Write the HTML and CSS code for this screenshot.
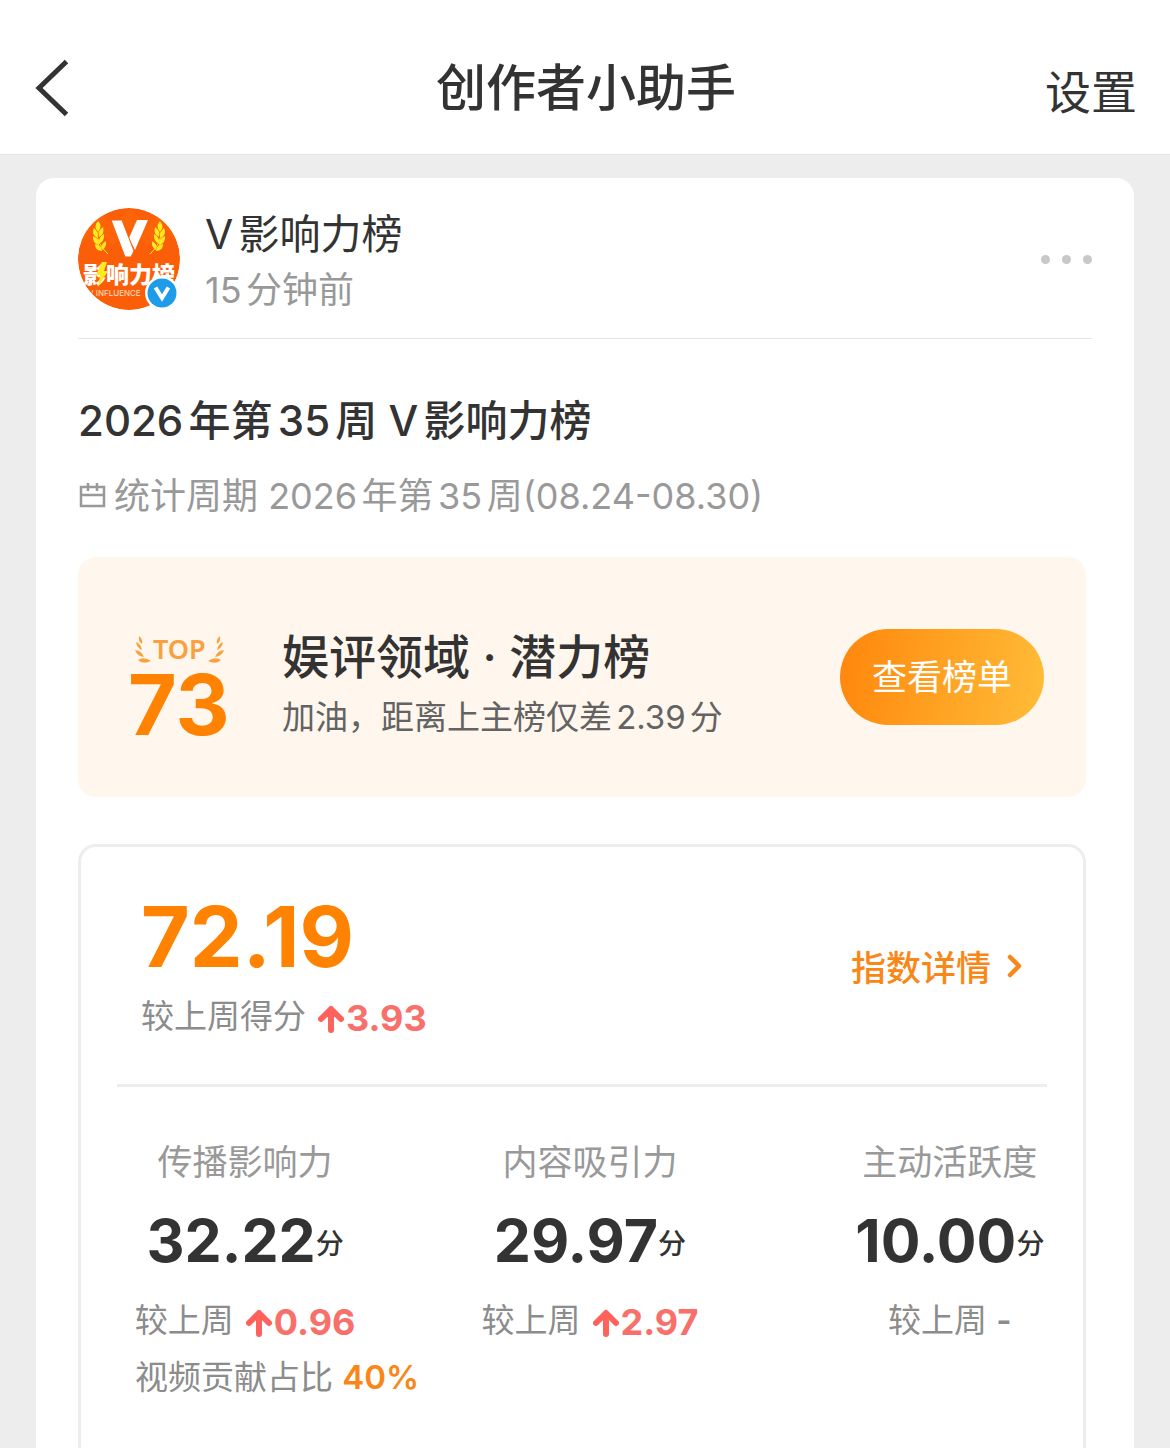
FILE: index.html
```html
<!DOCTYPE html>
<html lang="zh-CN">
<head>
	<meta charset="UTF-8">
	<meta name="viewport" content="width=device-width, initial-scale=1">
	<title>创作者小助手</title>
	<link rel="stylesheet" href="styles.css">
</head>
<body>
	<header class="navbar">
		<button class="back" type="button" aria-label="返回">
			<svg width="34" height="60" viewBox="0 0 34 60"><path d="M31.500 3.500L4 30l27.500 26.500" fill="none" stroke="#333" stroke-width="5"/></svg>
		</button>
		<h1>创作者小助手</h1>
		<a class="setting" href="#">设置</a>
	</header>
	<main class="card">
		<div class="author">
			<svg class="avatar" width="104" height="102" viewBox="0 0 104 102">
				<defs>
					<clipPath id="round"><circle cx="51" cy="51" r="51"/></clipPath>
					<g id="wheat" fill="#ffea20">
						<path d="M20 13q5 5 0 11q-5-5 0-11z"/>
						<path d="M16 20q5 4 3 10q-6-4-3-10z"/>
						<path d="M25 19q2 7-4 10q-2-6 4-10z"/>
						<path d="M15 28q7 3 6 9q-7-2-6-9z"/>
						<path d="M26 26q1 7-5 10q-1-7 5-10z"/>
						<path d="M17 36q7 1 7 7q-7 0-7-7z"/>
						<path d="M28 33q1 6-4 9q-2-6 4-9z"/>
						<path d="M19 24q0 12 11 22" fill="none" stroke="#ffea20" stroke-width="1"/>
					</g>
				</defs>
				<g clip-path="url(#round)">
					<circle cx="51" cy="51" r="51" fill="#fb5e08"/>
					<path d="M0 18l18-18 17 18 17-18 17 18 17-18 16 18v18L86 20 69 38 52 20 35 38 18 20 0 38z" fill="#ff7410" opacity=".3"/>
					<use href="#wheat"/>
					<use href="#wheat" transform="matrix(-1 0 0 1 102 0)"/>
					<path d="M59 12h11L57 42l-6-12z" fill="#fff"/>
					<path d="M33 12h11l12 31-3 6h-6z" fill="#fff" stroke="#fb5e08" stroke-width="1"/>
					<text class="logo-cn" x="5" y="75">影响力榜</text>
					<path d="M24 54h5l-3 9h4L20 79l2-12h-4z" fill="#ffea20"/>
					<text class="logo-en" x="10" y="88">V INFLUENCE</text>
				</g>
				<circle cx="84" cy="85" r="17" fill="#fff"/>
				<circle cx="84" cy="85" r="14.500" fill="#1f9ce9"/>
				<path d="M77.500 79.500L84 90l6.500-10.500" fill="none" stroke="#fff" stroke-width="4"/>
			</svg>
			<div class="who">
				<div class="name">V影响力榜</div>
				<div class="time">15分钟前</div>
			</div>
			<button class="more" type="button" aria-label="更多"><i></i><i></i><i></i></button>
		</div>
		<section class="content">
			<h2>2026年第35周 V影响力榜</h2>
			<p class="period">
				<svg width="28" height="28" viewBox="0 0 28 28" fill="none" stroke="#999" stroke-width="2.500"><path d="M3 5h23v19H3zM3 13h23M10 1v8M19 1v8"/></svg>
				<span>统计周期 2026年第35周(08.24-08.30)</span>
			</p>
			<div class="rank">
				<div class="top">
					<div class="top-label">
						<svg width="17" height="30" viewBox="0 0 17 30"><g id="laurel" fill="#f9a03f"><path d="M5 2q4 3 3 8q-4-3-3-8z"/><path d="M2 8q5 2 6 8q-5-2-6-8z"/><path d="M1 16q7 1 9 7q-7-1-9-7z"/><path d="M4 26q6-4 13 1q-8 4-13-1z"/></g></svg>
						<span>TOP</span>
						<svg width="17" height="30" viewBox="0 0 17 30"><use href="#laurel" transform="matrix(-1 0 0 1 17 0)"/></svg>
					</div>
					<div class="top-num">73</div>
				</div>
				<div class="field">
					<h3>娱评领域 · 潜力榜</h3>
					<p>加油，距离上主榜仅差2.39分</p>
				</div>
				<button class="view" type="button">查看榜单</button>
			</div>
			<div class="score">
				<div class="total">
					<div>
						<div class="total-num">72.19</div>
						<div class="compare">
							<span>较上周得分</span>
							<svg class="up" width="26" height="28" viewBox="0 0 26 28"><path d="M13 25V6M3 14L13 4l10 10" fill="none" stroke="#ff625c" stroke-width="6" stroke-linecap="round" stroke-linejoin="round"/></svg>
							<b>3.93</b>
						</div>
					</div>
					<a class="detail" href="#">指数详情
						<svg width="16" height="24" viewBox="0 0 16 24"><path d="M3 3l9 9-9 9" fill="none" stroke="#f98718" stroke-width="4.500" stroke-linecap="round" stroke-linejoin="round"/></svg>
					</a>
				</div>
				<div class="items">
					<div class="item">
						<h4>传播影响力</h4>
						<div class="num">32.22<small>分</small></div>
						<div class="compare">
							<span>较上周</span>
							<svg class="up" width="26" height="28" viewBox="0 0 26 28"><path d="M13 25V6M3 14L13 4l10 10" fill="none" stroke="#ff625c" stroke-width="6" stroke-linecap="round" stroke-linejoin="round"/></svg>
							<b>0.96</b>
						</div>
						<div class="video">视频贡献占比 <b>40%</b></div>
					</div>
					<div class="item">
						<h4>内容吸引力</h4>
						<div class="num">29.97<small>分</small></div>
						<div class="compare">
							<span>较上周</span>
							<svg class="up" width="26" height="28" viewBox="0 0 26 28"><path d="M13 25V6M3 14L13 4l10 10" fill="none" stroke="#ff625c" stroke-width="6" stroke-linecap="round" stroke-linejoin="round"/></svg>
							<b>2.97</b>
						</div>
					</div>
					<div class="item">
						<h4>主动活跃度</h4>
						<div class="num">10.00<small>分</small></div>
						<div class="compare"><span>较上周 <em>-</em></span></div>
					</div>
				</div>
			</div>
		</section>
	</main>
</body>
</html>
```
FILE: styles.css
```css
*{
	margin: 0;
	padding: 0;
	box-sizing: border-box;
}
body{
	min-height: 100vh;
	display: flex;
	flex-direction: column;
	background: #ededed;
	color: #333;
	font-family: Inter, "Noto Sans CJK SC", sans-serif;
	text-autospace: normal;
}
button{
	border: 0;
	background: none;
	font-family: inherit;
	cursor: pointer;
}
a{
	color: inherit;
	text-decoration: none;
}
svg{
	display: block;
	flex: none;
}

/* 顶部导航 */
.navbar{
	height: 155px;
	padding: 22px 33px 0 35px;
	display: grid;
	grid-template-columns: 1fr auto 1fr;
	align-items: center;
	background: #fff;
	border-bottom: 1px solid #e2e2e2;
}
.back{
	justify-self: start;
}
.navbar h1{
	font-size: 50px;
	line-height: 60px;
	font-weight: 500;
}
.setting{
	justify-self: end;
	padding-top: 8px;
	font-size: 46px;
	line-height: 60px;
}

/* 卡片 */
.card{
	flex: 1;
	display: flex;
	flex-direction: column;
	margin: 23px 36px 0;
	padding: 0 42px;
	background: #fff;
	border-radius: 18px 18px 0 0;
}
.author{
	height: 161px;
	display: flex;
	align-items: center;
	gap: 23px;
	padding-top: 2px;
	border-bottom: 1px solid #e6e6e6;
}
.logo-cn{
	font-size: 23px;
	font-weight: 900;
	fill: #fff;
}
.logo-en{
	font-size: 8px;
	fill: #ffe0c8;
}
.who{
	flex: 1;
	padding-top: 6px;
}
.name{
	font-size: 41px;
	line-height: 56px;
}
.time{
	font-size: 36px;
	line-height: 56px;
	color: #999;
}
.more{
	display: flex;
	gap: 12px;
}
.more i{
	width: 9px;
	height: 9px;
	border-radius: 50%;
	background: #c8c8c8;
}
.content{
	flex: 1;
	display: flex;
	flex-direction: column;
	padding: 52px 6px 0 0;
}
.content h2{
	font-size: 42px;
	line-height: 60px;
	font-weight: 500;
}
.period{
	display: flex;
	align-items: center;
	gap: 8px;
	margin: 16px 0 32px;
	font-size: 36px;
	line-height: 58px;
	color: #999;
}

/* 榜单排名 */
.rank{
	height: 240px;
	display: flex;
	align-items: center;
	padding: 0 42px 0 50px;
	background: #fff7ed;
	border-radius: 18px;
}
.top{
	width: 154px;
	padding-top: 26px;
}
.top-label{
	display: flex;
	align-items: center;
	gap: 2px;
	padding-left: 6px;
	font-family: "Noto Sans", sans-serif;
	font-size: 27px;
	line-height: 30px;
	font-weight: 600;
	color: #f9a03f;
}
.top-num{
	font-size: 84px;
	line-height: 82px;
	font-weight: 700;
	color: #ff8200;
}
.field{
	flex: 1;
	padding-top: 16px;
}
.field h3{
	font-size: 47px;
	line-height: 64px;
	font-weight: 500;
}
.field p{
	font-size: 33px;
	line-height: 56px;
	color: #636363;
}
.view{
	height: 96px;
	padding: 0 32px 6px;
	border-radius: 48px;
	background: linear-gradient(100deg, #ff860c, #ffbd38);
	color: #fff;
	font-size: 35px;
}

/* 得分 */
.score{
	flex: 1;
	margin-top: 47px;
	border: 3px solid #ededed;
	border-bottom: 0;
	border-radius: 18px 18px 0 0;
}
.total{
	height: 240px;
	display: flex;
	align-items: center;
	justify-content: space-between;
	margin: 0 36px;
	padding: 0 24px;
	border-bottom: 3px solid #ededed;
}
.total-num{
	font-size: 84px;
	line-height: 100px;
	font-weight: 700;
	color: #ff8200;
}
.compare{
	display: flex;
	align-items: center;
	font-size: 33px;
	line-height: 58px;
	color: #8c8c8c;
}
.compare b{
	padding-top: 4px;
	font-size: 36px;
	line-height: 54px;
	font-weight: 700;
	color: #f7706b;
}
.compare em{
	font-style: normal;
	font-weight: 600;
}
.up{
	margin: 6px 2px 0 12px;
}
.detail{
	display: flex;
	align-items: center;
	gap: 16px;
	font-size: 35px;
	font-weight: 500;
	color: #f98718;
}
.items{
	display: grid;
	grid-template-columns: minmax(0, 220fr) minmax(0, 469fr) minmax(0, 250fr);
	padding: 46px 8px 0 54px;
}
.item{
	display: flex;
	flex-direction: column;
	align-items: center;
	white-space: nowrap;
}
.item h4{
	font-size: 35px;
	line-height: 58px;
	font-weight: 400;
	color: #999;
}
.num{
	display: flex;
	align-items: center;
	font-size: 59px;
	line-height: 100px;
	font-weight: 700;
}
.num small{
	padding-top: 6px;
	font-size: 28px;
	line-height: 40px;
	font-weight: 500;
}
.video{
	align-self: flex-start;
	font-size: 33px;
	line-height: 56px;
	color: #8c8c8c;
}
.video b{
	font-weight: 600;
	color: #f98718;
}
```
